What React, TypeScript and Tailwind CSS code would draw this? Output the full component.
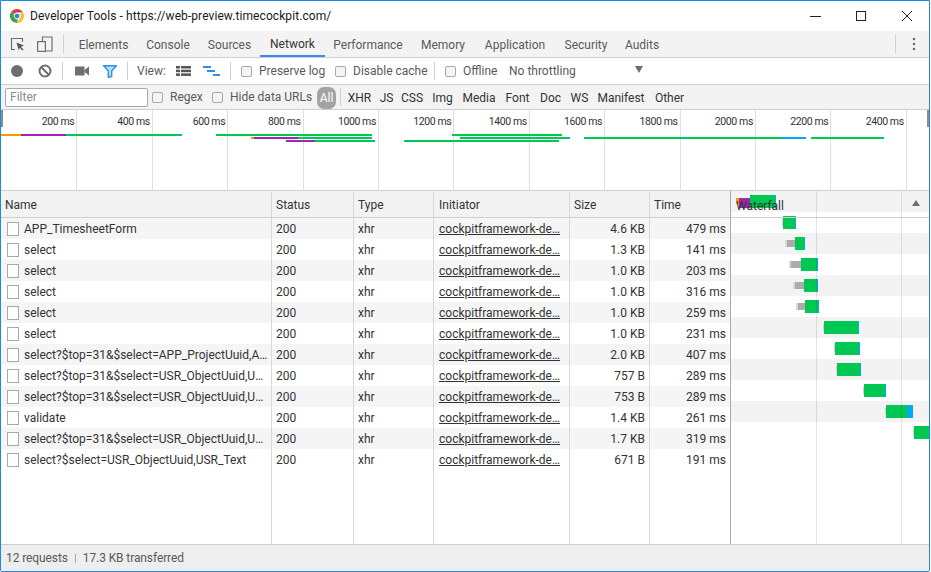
import type { ReactNode } from 'react'

const font = { fontFamily: 'Roboto, "Noto Sans", sans-serif' }

const tabs = [
  { label: 'Elements', w: 'w-[67px]' },
  { label: 'Console', w: 'w-[62px]' },
  { label: 'Sources', w: 'w-[61px]' },
  { label: 'Network', w: 'w-[65px]' },
  { label: 'Performance', w: 'w-[86px]' },
  { label: 'Memory', w: 'w-[64px]' },
  { label: 'Application', w: 'w-[80px]' },
  { label: 'Security', w: 'w-[62px]' },
  { label: 'Audits', w: 'w-[50px]' },
]

const types = [
  { label: 'XHR', w: 'w-[33px]' },
  { label: 'JS', w: 'w-[21px]' },
  { label: 'CSS', w: 'w-[30px]' },
  { label: 'Img', w: 'w-[31px]' },
  { label: 'Media', w: 'w-[42px]' },
  { label: 'Font', w: 'w-[35px]' },
  { label: 'Doc', w: 'w-[31px]' },
  { label: 'WS', w: 'w-[27px]' },
  { label: 'Manifest', w: 'w-[56px]' },
  { label: 'Other', w: 'w-[41px]' },
]

const requests = [
  ['APP_TimesheetForm', '4.6 KB', '479 ms'],
  ['select', '1.3 KB', '141 ms'],
  ['select', '1.0 KB', '203 ms'],
  ['select', '1.0 KB', '316 ms'],
  ['select', '1.0 KB', '259 ms'],
  ['select', '1.0 KB', '231 ms'],
  ['select?$top=31&$select=APP_ProjectUuid,A…', '2.0 KB', '407 ms'],
  ['select?$top=31&$select=USR_ObjectUuid,U…', '757 B', '289 ms'],
  ['select?$top=31&$select=USR_ObjectUuid,U…', '753 B', '289 ms'],
  ['validate', '1.4 KB', '261 ms'],
  ['select?$top=31&$select=USR_ObjectUuid,U…', '1.7 KB', '319 ms'],
  ['select?$select=USR_ObjectUuid,USR_Text', '671 B', '191 ms'],
]

// x values are relative to the waterfall column (starts at 731)
const bars = [
  { wait: 0, start: 52, end: 64, tip: 65 },
  { wait: 56, start: 64, end: 73, tip: 74 },
  { wait: 60, start: 70, end: 86, tip: 87 },
  { wait: 64, start: 73, end: 86, tip: 87 },
  { wait: 67, start: 74, end: 87, tip: 88 },
  { wait: 0, start: 93, end: 127, tip: 128 },
  { wait: 0, start: 104, end: 128, tip: 129 },
  { wait: 0, start: 106, end: 129, tip: 130 },
  { wait: 0, start: 133, end: 154, tip: 155 },
  { wait: 0, start: 155, end: 176, tip: 182 },
  { wait: 0, start: 183, end: 198, tip: 199 },
]

const overviewLabels = ['200 ms', '400 ms', '600 ms', '800 ms', '1000 ms', '1200 ms', '1400 ms', '1600 ms', '1800 ms', '2000 ms', '2200 ms', '2400 ms']

const GREEN = '#00c853'
const BLUE = '#03a9f4'
const PURPLE = '#9c27b0'
const ORANGE = '#ff9800'

// [x1, x2, colour] per line of the overview
const overviewLines: [number, number, string, number][] = [
  [1, 21, ORANGE, 134], [21, 66, PURPLE, 134], [66, 181, GREEN, 134], [181, 182, BLUE, 134],
  [216, 371, GREEN, 134], [371, 372, BLUE, 134], [452, 562, GREEN, 134],
  [251, 254, ORANGE, 137], [254, 298, PURPLE, 137], [298, 371, GREEN, 137], [371, 372, BLUE, 137],
  [460, 568, GREEN, 137], [568, 570, BLUE, 137], [584, 683, GREEN, 137], [683, 685, BLUE, 137],
  [685, 782, GREEN, 137], [782, 806, BLUE, 137], [811, 883, GREEN, 137], [883, 884, BLUE, 137],
  [286, 315, PURPLE, 140], [315, 374, GREEN, 140], [374, 375, BLUE, 140], [404, 558, GREEN, 140], [558, 559, BLUE, 140],
]

function Sep() {
  return <div className="h-[18px] w-px bg-[#d0d0d0] shrink-0" />
}

function Check({ label, className }: { label: string; className: string }) {
  return (
    <div className={`flex items-center shrink-0 ${className}`}>
      <span className="h-[11px] w-[11px] rounded-[2px] border border-[#a9a9a9] bg-[#f4f4f4] mr-[7px]" />
      <span className="text-[12px] text-[#5a5a5a] whitespace-nowrap">{label}</span>
    </div>
  )
}

function Cell({ className, children }: { className: string; children?: ReactNode }) {
  return (
    <div className={`h-full shrink-0 border-r border-[#d8d8d8] overflow-hidden whitespace-nowrap flex items-center ${className}`}>
      {children}
    </div>
  )
}

function ChromeLogo() {
  return (
    <svg width="14" height="14" viewBox="0 0 16 16">
      <path d="M8 0a8 8 0 0 1 6.93 4H8a4 4 0 0 0-3.6 2.3L2 2.6A8 8 0 0 1 8 0z" fill="#e53935" />
      <path d="M14.93 4A8 8 0 0 1 8 16l3.4-5.9A4 4 0 0 0 11.5 6z" fill="#fbc02d" />
      <path d="M8 16A8 8 0 0 1 2 2.6l3.4 5.9A4 4 0 0 0 9 11.9z" fill="#43a047" />
      <circle cx="8" cy="8" r="3.2" fill="#1e88e5" stroke="#fff" strokeWidth="0.9" />
    </svg>
  )
}

function InspectIcon() {
  return (
    <svg width="15" height="15" viewBox="0 0 15 15" fill="none">
      <path d="M5 12.5H1.5V1.5h11V5" stroke="#6e6e6e" strokeWidth="1.2" />
      <path d="M6.5 5.5l7.5 3-3 1.2 2.6 2.8-1.2 1.1-2.6-2.8-1 2.8z" fill="#5a5a5a" />
    </svg>
  )
}

function DeviceIcon() {
  return (
    <svg width="16" height="16" viewBox="0 0 16 16" fill="none" stroke="#6e6e6e" strokeWidth="1.2">
      <path d="M5.5 5V1h9.5v14H9" />
      <rect x="0.6" y="5.6" width="7.8" height="9.8" />
    </svg>
  )
}

function App() {
  return (
    <div className="h-[572px] w-[930px] overflow-hidden flex flex-col bg-white border border-[#1e88e5] rounded-b-[2px]" style={font}>
      {/* title bar */}
      <div className="h-[30px] flex items-center shrink-0 pl-[9px]">
        <ChromeLogo />
        <span className="ml-[6px] text-[12px] tracking-[0.08px] text-[#1a1a1a] whitespace-nowrap">Developer Tools - https://web-preview.timecockpit.com/</span>
        <div className="ml-auto flex items-center">
          <svg width="120" height="14" viewBox="0 0 120 14" fill="none" stroke="#222" strokeWidth="1">
            <path d="M5 7.5h11" />
            <rect x="51.5" y="2.5" width="9" height="9" />
            <path d="M97 2l10 10M107 2L97 12" />
          </svg>
          <div className="w-[4px]" />
        </div>
      </div>

      {/* tabs */}
      <div className="relative h-[27px] shrink-0 bg-[#f3f3f3] border-b border-[#cfcfcf] flex items-center">
        <div className="w-[24px] flex justify-end"><InspectIcon /></div>
        <div className="ml-[12px]"><DeviceIcon /></div>
        <div className="ml-[10px]"><Sep /></div>
        <div className="ml-[6px] flex h-full">
          {tabs.map((t) => (
            <div
              key={t.label}
              className={`h-[26px] pt-px flex items-center justify-center text-[12px] whitespace-nowrap ${t.w} ${t.label === 'Network' ? 'border-b-2 border-[#4285f4] text-[#333333]' : 'text-[#5a5a5a]'}`}
            >
              {t.label}
            </div>
          ))}
        </div>
        <div className="ml-auto mr-[33px]"><Sep /></div>
        <svg className="absolute left-[911px]" width="4" height="14" viewBox="0 0 4 14" fill="#6e6e6e">
          <circle cx="2" cy="2" r="1.3" /><circle cx="2" cy="7" r="1.3" /><circle cx="2" cy="12" r="1.3" />
        </svg>
      </div>

      {/* network toolbar */}
      <div className="h-[27px] shrink-0 border-b border-[#cfcfcf] flex items-center">
        <div className="ml-[10px] h-[12px] w-[12px] rounded-full bg-[#6e6e6e]" />
        <svg className="ml-[15px]" width="14" height="14" viewBox="0 0 14 14" fill="none" stroke="#6e6e6e" strokeWidth="2">
          <circle cx="7" cy="7" r="5.5" /><path d="M3 3l8 8" />
        </svg>
        <div className="ml-[10px]"><Sep /></div>
        <svg className="ml-[12px]" width="14" height="10" viewBox="0 0 14 10" fill="#6e6e6e">
          <rect x="0" y="0.5" width="9.5" height="9" /><path d="M9.5 4L14 0.5v9L9.5 6z" />
        </svg>
        <svg className="ml-[14px]" width="14" height="13" viewBox="0 0 14 13" fill="none">
          <path d="M0.8 0.8h12.4L8.7 6v5.5l-3.4 1V6z" stroke="#2f8fe8" strokeWidth="1.4" fill="#b9dcf9" />
        </svg>
        <div className="ml-[10px]"><Sep /></div>
        <span className="ml-[9px] text-[12px] text-[#5a5a5a] w-[39px]">View:</span>
        <svg width="15" height="10" viewBox="0 0 15 10" fill="#555">
          <rect x="0" y="0" width="4" height="2.5" /><rect x="5" y="0" width="10" height="2.5" />
          <rect x="0" y="3.7" width="4" height="2.5" /><rect x="5" y="3.7" width="10" height="2.5" />
          <rect x="0" y="7.4" width="4" height="2.5" /><rect x="5" y="7.4" width="10" height="2.5" />
        </svg>
        <svg className="ml-[12px]" width="17" height="10" viewBox="0 0 17 10" fill="#2f8fe8">
          <rect x="0" y="0" width="8" height="2" /><rect x="4" y="4" width="8" height="2" /><rect x="10" y="8" width="7" height="2" />
        </svg>
        <div className="ml-[10px]"><Sep /></div>
        <Check label="Preserve log" className="ml-[10px] w-[94px]" />
        <Check label="Disable cache" className="w-[99px]" />
        <Sep />
        <Check label="Offline" className="ml-[10px] w-[64px]" />
        <span className="text-[12px] text-[#5a5a5a] whitespace-nowrap w-[126px]">No throttling</span>
        <div className="border-x-[4.5px] border-x-transparent border-t-[7px] border-t-[#6e6e6e] mb-[3px]" />
      </div>

      {/* filter bar */}
      <div className="h-[25px] shrink-0 bg-[#f3f3f3] border-b border-[#cfcfcf] flex items-center">
        <div className="ml-[4px] h-[19px] w-[143px] rounded-[2px] border border-[#a9a9a9] bg-white flex items-center pl-[4px] text-[12px] text-[#8a8a8a]">Filter</div>
        <Check label="Regex" className="ml-[4px] w-[60px]" />
        <Check label="Hide data URLs" className="w-[105px]" />
        <div className="h-[22px] w-[19px] rounded-[7px] bg-[#a3a3a3] text-white text-[12px] flex items-center justify-center mt-[1px]">All</div>
        <div className="ml-[4px]"><Sep /></div>
        <div className="ml-[2px] pt-px flex">
          {types.map((t) => (
            <span key={t.label} className={`text-[12px] text-[#333333] whitespace-nowrap text-center ${t.w}`}>{t.label}</span>
          ))}
        </div>
      </div>

      {/* overview */}
      <div className="h-[81px] shrink-0 border-b border-[#cfcfcf] relative flex pl-[1px]">
        {overviewLabels.map((l) => (
          <div key={l} className="w-[75.4px] shrink-0 h-full border-r border-[#e0e0e0] text-right pr-[2px] pt-[4px] text-[10.5px] tracking-[-0.4px] text-[#333333] whitespace-nowrap">
            {l}
          </div>
        ))}
        <div className="absolute left-0 top-0 h-[17px] w-[2px] bg-[#8c8c8c]" />
        <div className="absolute right-0 top-0 h-[17px] w-[2px] bg-[#8c8c8c]" />
        <svg className="absolute left-0 top-0" width="928" height="81">
          {overviewLines.map(([a, b, c, y], i) => (
            <rect key={i} x={a - 1} y={y - 110} width={b - a} height="2" fill={c} />
          ))}
        </svg>
      </div>

      {/* table */}
      <div className="flex flex-1 min-h-0">
        <div className="w-[730px] shrink-0 flex flex-col">
          <div className="h-[27px] shrink-0 flex pt-px bg-[#f3f3f3] border-b border-[#cfcfcf] text-[12px] text-[#333333]">
            <Cell className="w-[271px] pl-[4px]">Name</Cell>
            <Cell className="w-[82px] pl-[4px]">Status</Cell>
            <Cell className="w-[80px] pl-[4px]">Type</Cell>
            <Cell className="w-[136px] pl-[5px]">Initiator</Cell>
            <Cell className="w-[80px] pl-[4px]">Size</Cell>
            <Cell className="w-[81px] pl-[4px]">Time</Cell>
          </div>
          {requests.map((r, i) => (
            <div key={i} className={`h-[21px] shrink-0 flex text-[12px] text-[#333333] ${i % 2 === 0 ? 'bg-[#f5f5f5]' : 'bg-white'}`}>
              <Cell className="w-[271px] pl-[6px]">
                <span className="h-[14px] w-[12px] shrink-0 border border-[#a9a9a9] bg-white mr-[5px]" />
                <span>{r[0]}</span>
              </Cell>
              <Cell className="w-[82px] pl-[4px]">200</Cell>
              <Cell className="w-[80px] pl-[4px]">xhr</Cell>
              <Cell className="w-[136px] px-[5px]">
                <span className="underline">cockpitframework-de…</span>
              </Cell>
              <Cell className="w-[80px] pr-[4px] justify-end">{r[1]}</Cell>
              <Cell className="w-[81px] pr-[4px] justify-end">{r[2]}</Cell>
            </div>
          ))}
          <div className="flex flex-1 min-h-0">
            <Cell className="w-[271px]" />
            <Cell className="w-[82px]" />
            <Cell className="w-[80px]" />
            <Cell className="w-[136px]" />
            <Cell className="w-[80px]" />
            <Cell className="w-[81px]" />
          </div>
        </div>

        {/* waterfall column */}
        <div className="relative flex-1 min-w-0 -ml-px overflow-hidden border-l border-[#a9a9a9] flex flex-col">
          <div className="h-[21px] shrink-0 bg-[#f3f3f3]" />
          {bars.map((b, i) => (
            <div key={i} className={`h-[21px] shrink-0 relative ${i % 2 === 0 ? 'bg-white' : 'bg-[#f3f3f3]'}`}>
              {b.wait > 0 && (
                <>
                  <div className="absolute top-[7px] h-[7px] bg-[#ababab]" style={{ left: b.wait, width: b.start - b.wait }} />
                  <div className="absolute top-[7px] h-[7px] w-[2px] bg-[#d9d9d9]" style={{ left: b.wait - 2 }} />
                </>
              )}
              {b.wait === 0 && (
                <div className="absolute top-[7px] h-[7px] w-[1px] bg-[#d0d0d0]" style={{ left: b.start - 1 }} />
              )}
              <div className="absolute top-[4px] h-[13px]" style={{ left: b.start, width: b.tip - b.start, backgroundColor: BLUE }} />
              <div className="absolute top-[4px] h-[13px]" style={{ left: b.start, width: b.end - b.start, backgroundColor: GREEN }} />
            </div>
          ))}
          {/* header overlay */}
          <div className="absolute left-0 right-0 top-[26px] h-px bg-[#cfcfcf]" />
          <div className="absolute left-[85px] top-0 bottom-0 w-px bg-black/10" />
          <div className="absolute left-[170px] top-0 bottom-0 w-px bg-black/10" />
          <div className="absolute left-[19px] top-[4px] h-[13px] w-[25px]" style={{ backgroundColor: GREEN }} />
          <div className="absolute left-[44px] top-[4px] h-[13px] w-px" style={{ backgroundColor: BLUE }} />
          <div className="absolute left-[8px] top-[7px] h-[10px] w-[11px]" style={{ backgroundColor: PURPLE }} />
          <div className="absolute left-[5px] top-[7px] h-[6px] w-[3px]" style={{ backgroundColor: ORANGE }} />
          <span className="absolute left-[5px] top-[6px] text-[12px] text-[#333333]">Waterfall</span>
          <div className="absolute left-[181px] top-[9px] border-x-[4.5px] border-x-transparent border-b-[6px] border-b-[#6e6e6e]" />
        </div>
      </div>

      {/* status bar */}
      <div className="h-[27px] shrink-0 bg-[#eeeeee] border-t border-[#cfcfcf] flex items-center pl-[5px] text-[12px] tracking-[-0.1px] text-[#5a5a5a] whitespace-nowrap">
        <span>12 requests</span>
        <span className="mx-[7px] h-[9px] w-px bg-[#a9a9a9]" />
        <span>17.3 KB transferred</span>
      </div>
    </div>
  )
}

export default App
